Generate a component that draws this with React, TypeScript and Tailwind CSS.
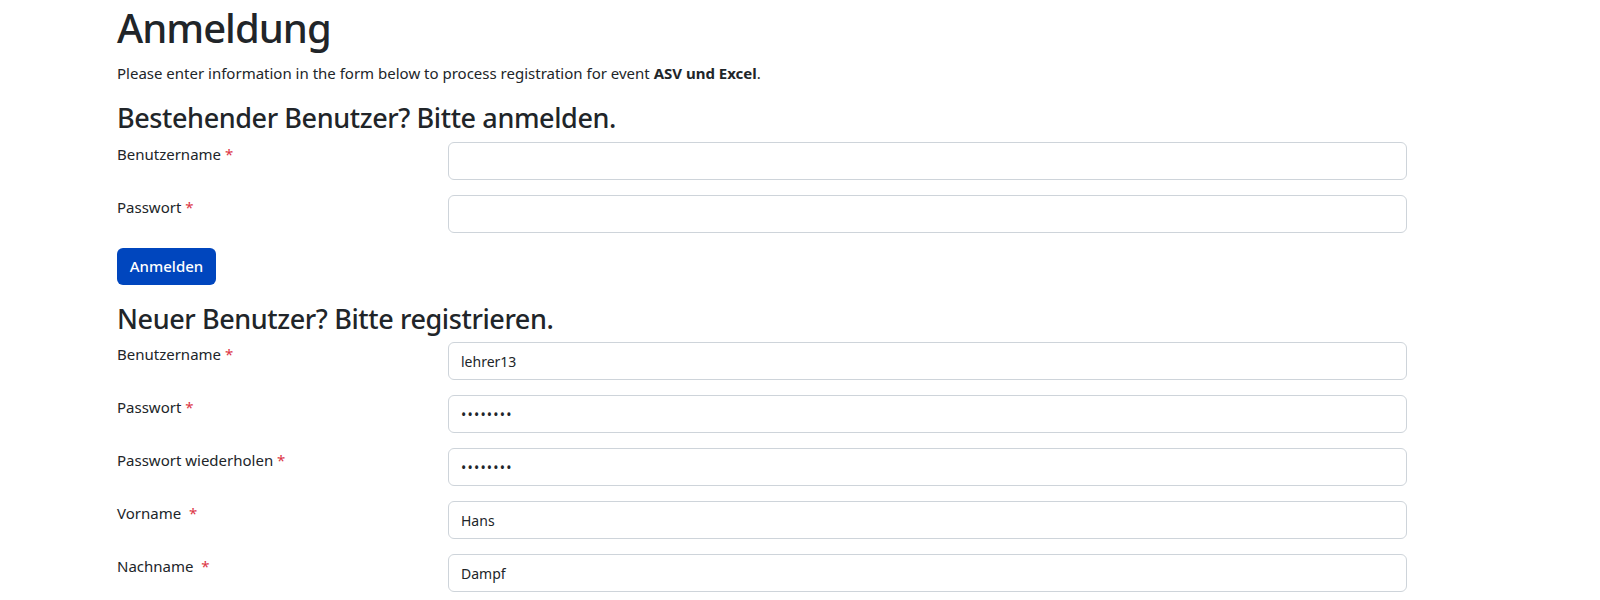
import React from "react";

const font = { fontFamily: '"Noto Sans", "Open Sans", sans-serif' };

function Row({ label, value, type = "text", gap = false }: { label: string; value?: string; type?: string; gap?: boolean }) {
  return (
    <div className="flex mb-[15px]">
      <label className="w-[331px] shrink-0 text-[15px] leading-[21px] text-[#212529] pt-[2px]">
        {label}
        {gap ? "\u00a0" : ""} <span className="text-[#dc3545]">*</span>
      </label>
      <input
        type={type}
        defaultValue={value}
        readOnly
        className={
          "w-[959px] h-[38px] border border-[#ced4da] rounded-[6px] px-[12px] text-[14px] text-[#212529] bg-white outline-none " +
          (type === "password" ? "tracking-[1.2px]" : "")
        }
        style={font}
      />
    </div>
  );
}

export default function App() {
  return (
    <div className="bg-white min-h-[600px] text-[#212529]" style={font}>
      <div className="ml-[117px] w-[1290px] pt-[4px]">
        <h1 className="text-[40px] leading-[48px] font-medium tracking-[-1px] mb-[10px]">Anmeldung</h1>
        <p className="text-[15px] leading-[22px] mb-[18px]">
          Please enter information in the form below to process registration for event <b>ASV und Excel</b>.
        </p>
        <h3 className="text-[27px] leading-[32px] font-medium tracking-[-0.4px] mb-[8px]">Bestehender Benutzer? Bitte anmelden.</h3>
        <Row label="Benutzername" />
        <Row label="Passwort" type="password" />
        <button className="block bg-[#0046be] text-white text-[15px] font-medium rounded-[6px] w-[99px] h-[37px] mb-[18px]" style={font}>
          Anmelden
        </button>
        <h3 className="text-[27px] leading-[32px] font-medium tracking-[-0.4px] mb-[7px]">Neuer Benutzer? Bitte registrieren.</h3>
        <Row label="Benutzername" value="lehrer13" />
        <Row label="Passwort" value="12345678" type="password" />
        <Row label="Passwort wiederholen" value="12345678" type="password" />
        <Row label="Vorname" value="Hans" gap />
        <Row label="Nachname" value="Dampf" gap />
      </div>
    </div>
  );
}
